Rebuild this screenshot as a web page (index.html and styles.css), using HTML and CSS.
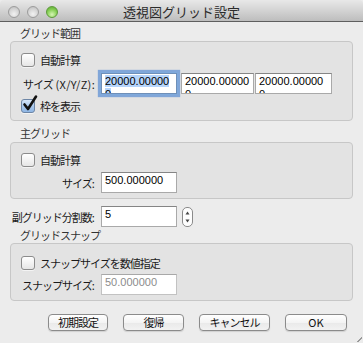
FILE: index.html
```html
<!DOCTYPE html>
<html lang="ja">
<head>
<meta charset="utf-8">
<title>透視図グリッド設定</title>
<link rel="stylesheet" href="styles.css">
</head>
<body>
<div class="window">
  <div class="titlebar">
    <div class="lights">
      <span class="light"></span>
      <span class="light"></span>
      <span class="light green"></span>
    </div>
    <div class="title">透視図グリッド設定</div>
    <div></div>
  </div>
  <div class="content">
    <div class="group-label">グリッド範囲</div>
    <div class="box box1">
      <div class="check-row"><span class="cb"></span><span class="txt">自動計算</span></div>
      <div class="field-row r-size">
        <span class="lbl lbl-box">サイズ<span class="latin"> (X/Y/Z):</span></span>
        <span class="field f1 focus"><span class="sel">20000.000000</span></span>
        <span class="field f2">20000.000000</span>
        <span class="field f3">20000.000000</span>
      </div>
      <div class="check-row r-frame">
        <span class="cb checked"><svg class="check" width="18" height="18" viewBox="0 0 18 18"><path d="M3.5 9.5 L7 14 L15 1.5" fill="none" stroke="#111" stroke-width="2.6" stroke-linecap="round" stroke-linejoin="round"/></svg></span>
        <span class="txt">枠を表示</span>
      </div>
    </div>

    <div class="group-label gl2">主グリッド</div>
    <div class="box box2">
      <div class="check-row"><span class="cb"></span><span class="txt">自動計算</span></div>
      <div class="field-row r-main">
        <span class="lbl lbl-box">サイズ<span class="latin">:</span></span>
        <span class="field fw">500.000000</span>
      </div>
    </div>

    <div class="field-row r-sub">
      <span class="lbl lbl-out">副グリッド分割数<span class="latin">:</span></span>
      <span class="field fw">5</span>
      <span class="stepper"><svg width="11" height="20" viewBox="0 0 11 20"><rect x="0.5" y="0.5" width="10" height="19" rx="4.5" fill="#fdfdfd" stroke="#8a8a8a"/><path d="M5.5 4.5 L7.5 7.5 L3.5 7.5 Z" fill="#444"/><path d="M5.5 15.5 L7.5 12.5 L3.5 12.5 Z" fill="#444"/></svg></span>
    </div>

    <div class="group-label gl3">グリッドスナップ</div>
    <div class="box box3">
      <div class="check-row"><span class="cb"></span><span class="txt">スナップサイズを数値指定</span></div>
      <div class="field-row r-snap">
        <span class="lbl lbl-box">スナップサイズ<span class="latin">:</span></span>
        <span class="field fw disabled">50.000000</span>
      </div>
    </div>

    <div class="buttons">
      <span class="btn b1">初期設定</span>
      <span class="btn b2">復帰</span>
      <span class="btn b3">キャンセル</span>
      <span class="btn b4">OK</span>
    </div>
  </div>
  <span class="grip"></span>
</div>
</body>
</html>
```
FILE: styles.css
```css
* { box-sizing: border-box; }
html, body { margin: 0; padding: 0; }
body {
  width: 363px;
  height: 343px;
  overflow: hidden;
  background: #ececec;
  font-family: "Noto Sans CJK JP", "Noto Sans", sans-serif;
  font-size: 11px;
  color: #1a1a1a;
}
.window {
  position: relative;
  width: 363px;
  height: 343px;
  background: #ececec;
}
.titlebar {
  height: 22px;
  display: grid;
  grid-template-columns: 1fr auto 1fr;
  align-items: center;
  background: linear-gradient(#e8e8e8, #d3d3d3 50%, #bdbdbd);
  border-bottom: 1px solid #5f5f5f;
  border-radius: 4px 4px 0 0;
}
.lights {
  display: flex;
  gap: 7px;
  padding-left: 8px;
  padding-top: 2px;
}
.light {
  width: 12px;
  height: 12px;
  border-radius: 50%;
  border: 1px solid #9c9c9c;
  background: radial-gradient(circle at 50% 70%, #f2f2f2, #d2d2d2 60%, #b8b8b8);
}
.light.green {
  border-color: #5d9a3b;
  background: radial-gradient(circle at 50% 75%, #d6f5b4, #86cf55 55%, #5aa62e);
}
.title {
  font-size: 13px;
  color: #2b2b2b;
  line-height: 16px;
  padding-top: 2px;
}
.content {
  padding: 4px 10px 0 10px;
}
.group-label {
  padding-left: 10px;
  line-height: 14px;
  height: 14px;
  color: #333;
  letter-spacing: -1px;
}
.gl2 { margin-top: 5px; }
.gl3 { margin-top: 1px; }
.box {
  margin-top: 1px;
  background: #e3e3e3;
  border: 1px solid #c7c7c7;
  border-radius: 4px;
  padding: 0 10px;
}
.box1 { padding-top: 11px; padding-bottom: 7px; }
.box2 { margin-top: 2px; padding-top: 10px; padding-bottom: 5px; }
.box3 { padding-top: 12px; padding-bottom: 5px; }
.check-row {
  display: flex;
  align-items: center;
  height: 14px;
}
.txt {
  margin-left: 5px;
  letter-spacing: -1px;
  line-height: 14px;
}
.cb {
  position: relative;
  width: 14px;
  height: 14px;
  flex: none;
  border: 1px solid #8c8c8c;
  border-radius: 3px;
  background: linear-gradient(#ffffff, #f3f3f3 50%, #e6e6e6);
  box-shadow: 0 1px 0 rgba(255,255,255,.6);
}
.cb.checked {
  border-color: #6d86a6;
  background: linear-gradient(#d6e6f8, #a9c8ec 50%, #8fb6e4);
}
.check {
  position: absolute;
  left: -1px;
  top: -5px;
  overflow: visible;
}
.r-frame { margin-top: 5px; }
.field-row {
  display: flex;
  align-items: center;
}
.r-size { margin-top: 6px; }
.r-main { margin-top: 5px; }
.r-sub { margin-top: 7px; }
.r-snap { margin-top: 4px; }
.lbl {
  text-align: right;
  letter-spacing: -1px;
  line-height: 14px;
  white-space: nowrap;
  margin-right: 6px;
}
.latin { letter-spacing: 0.3px; }
.lbl-box { width: 74px; }
.lbl-out { width: 85px; }
.field {
  display: block;
  height: 21px;
  background: #fff;
  border: 1px solid #a9a9a9;
  border-top-color: #858585;
  padding: 1px 4px 0 3px;
  font-family: "Liberation Sans", Arial, sans-serif;
  font-size: 11px;
  line-height: 13px;
  color: #000;
  overflow: hidden;
  word-break: break-all;
  flex: none;
}
.f1 { width: 76px; }
.f2 { width: 73px; margin-left: 4px; padding-right: 1px; }
.f3 { width: 77px; margin-left: 1px; }
.fw { width: 76px; }
.focus {
  box-shadow: 0 0 0 1px #7ea9dc, 0 0 1px 3px rgba(96,146,212,.75);
  border-color: #6f8fb8;
}
.sel { background: #b5d4fb; }
.disabled { color: #8c8c8c; border-color: #c2c2c2; border-top-color: #a8a8a8; }
.stepper {
  display: block;
  margin-left: 5px;
  width: 11px;
  height: 20px;
  flex: none;
}
.stepper svg { display: block; }
.buttons {
  margin-top: 13px;
  display: flex;
  justify-content: flex-end;
  gap: 15px;
  padding-right: 6px;
}
.btn {
  display: block;
  height: 17px;
  line-height: 15px;
  text-align: center;
  border: 1px solid #8b8b8b;
  border-radius: 4px;
  background: linear-gradient(#ffffff, #f4f4f4 50%, #e9e9e9 51%, #f2f2f2);
  box-shadow: 0 1px 1px rgba(0,0,0,.12);
  color: #111;
  letter-spacing: -1px;
}
.b1 { width: 60px; }
.b2 { width: 61px; }
.b3 { width: 71px; }
.b4 { width: 62px; letter-spacing: 0; }
.grip {
  position: absolute;
  right: 1px;
  bottom: 1px;
  width: 5px;
  height: 5px;
  background: linear-gradient(135deg, transparent 45%, #9a9a9a 45%, #9a9a9a 60%, transparent 60%);
}
```
